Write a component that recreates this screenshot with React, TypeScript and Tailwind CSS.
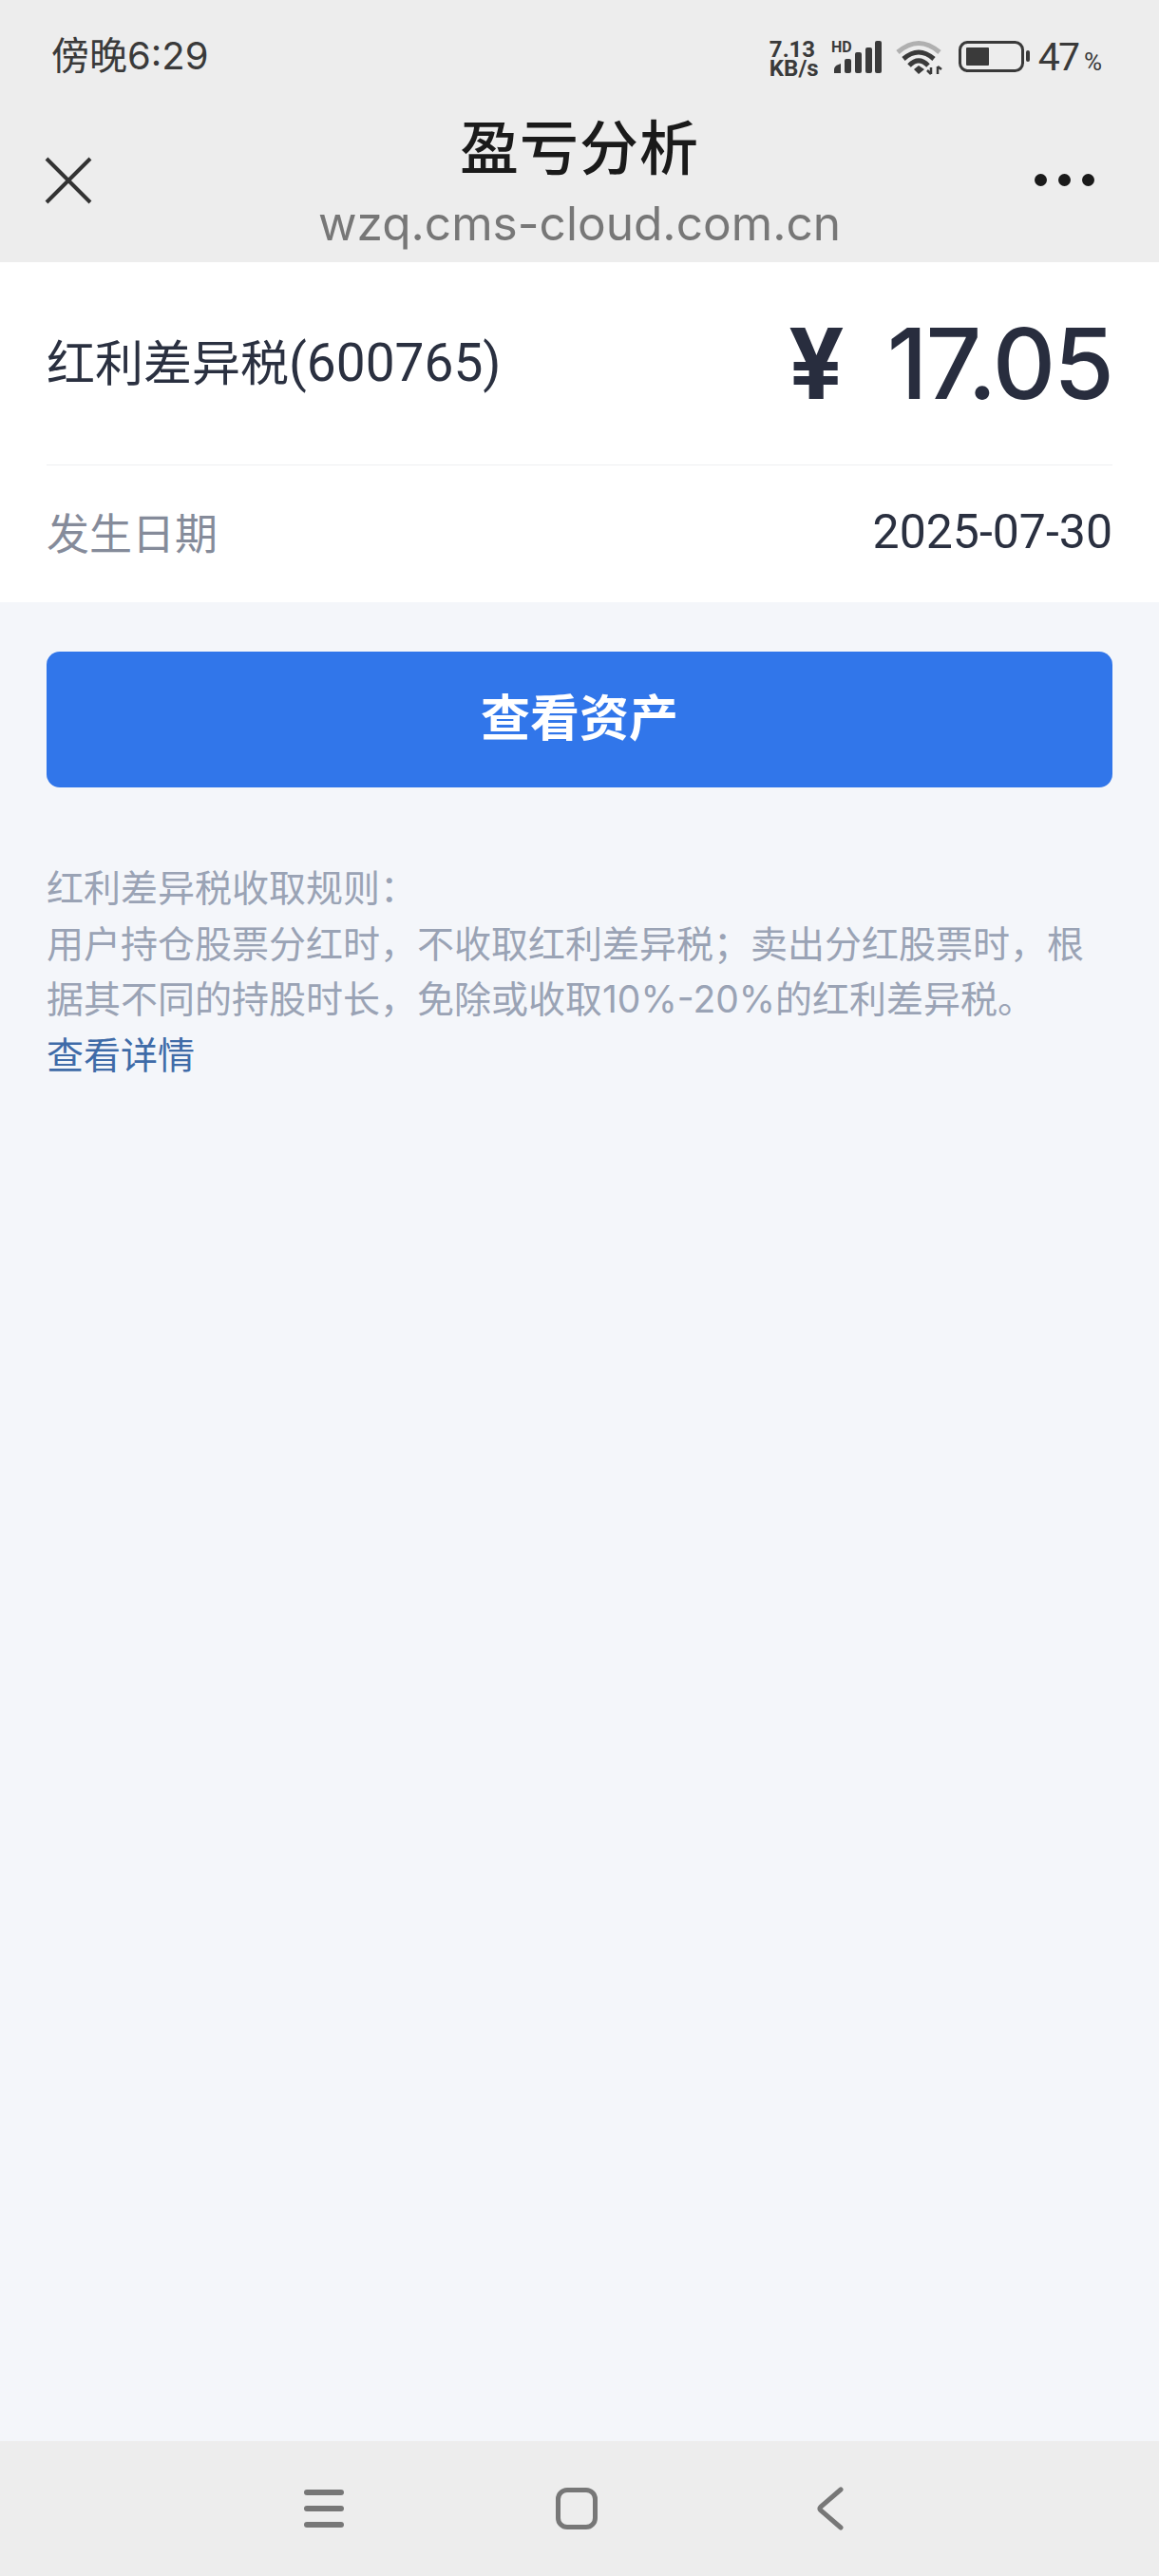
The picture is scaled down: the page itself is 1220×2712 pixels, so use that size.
const mixed = "font-['Inter','Noto_Sans_CJK_SC',sans-serif]";

function Signal() {
  return (
    <svg width="54" height="39" viewBox="0 -3 54 39" className="-mt-[3px] ml-[9px] block">
      <text x="0" y="13" fontSize="16" fontWeight="700" fill="#3a3a3a" fontFamily="Roboto, sans-serif">HD</text>
      <path d="M3 35 v-4 q0-4 7-6 v10 z" fill="#3a3a3a" />
      <rect x="14" y="20" width="7" height="15" rx="2" fill="#3a3a3a" />
      <rect x="25" y="13" width="7" height="22" rx="2" fill="#3a3a3a" />
      <rect x="36" y="8" width="7" height="27" rx="2" fill="#3a3a3a" />
      <rect x="46" y="1" width="7" height="34" rx="2" fill="#3a3a3a" />
    </svg>
  );
}

function Wifi() {
  return (
    <svg width="50" height="38" viewBox="0 0 50 38" className="ml-[14px] block">
      <path d="M2 13 Q24 -6 46 13" fill="none" stroke="#b0b0b0" strokeWidth="5" />
      <path d="M8 20 Q24 6 40 20" fill="none" stroke="#3a3a3a" strokeWidth="5" />
      <path d="M14 27 Q24 17 34 27" fill="none" stroke="#3a3a3a" strokeWidth="5" />
      <path d="M19 31 L24 27 L30 31 L24 36 Z" fill="#3a3a3a" />
      <path d="M37 36 V29 M33 32 L37 36 M44 36 V28 M44 28 L48 31" fill="none" stroke="#3a3a3a" strokeWidth="2.500" />
    </svg>
  );
}

function Battery() {
  return (
    <svg width="76" height="36" viewBox="0 0 76 36" className="ml-[16px] block">
      <rect x="1.500" y="2.500" width="66" height="30" rx="8" fill="none" stroke="#3a3a3a" strokeWidth="3" />
      <rect x="8" y="8" width="24" height="19" rx="1" fill="#3a3a3a" />
      <rect x="71" y="11" width="4" height="12" rx="2" fill="#3a3a3a" />
    </svg>
  );
}

function Status() {
  return (
    <div className="flex h-[88px] items-start justify-between pt-[35px] pl-[54px] pr-[60px]">
      <span className={`${mixed} text-[40px] leading-[48px] text-[#3a3a3a]`}>傍晚6:29</span>
      <div className="flex items-start pt-[7px]">
        <div className="w-[56px] font-['Roboto',sans-serif] text-[24px] font-bold leading-[20px] text-[#3a3a3a]">7.13 KB/s</div>
        <Signal />
        <Wifi />
        <Battery />
        <span className="ml-[8px] font-['Roboto',sans-serif] text-[41px] leading-[36px] tracking-[-2px] text-[#3a3a3a]">47<span className="ml-[6px] text-[26px] tracking-normal">%</span></span>
      </div>
    </div>
  );
}

function Nav() {
  return (
    <div className="relative flex h-[188px] items-start justify-center">
      <div className="flex flex-col items-center">
        <div className="mt-[28px] font-['Noto_Sans_CJK_SC',sans-serif] text-[62px] font-medium leading-[72px] tracking-[1px] text-[#1a1a1a]">盈亏分析</div>
        <div className={`${mixed} mt-[17px] text-[49.600px] leading-[60px] text-[#777777]`}>wzq.cms-cloud.com.cn</div>
      </div>
      <svg width="50" height="50" viewBox="0 0 50 50" className="absolute left-[47px] top-[77px]">
        <path d="M2 2 L48 48 M48 2 L2 48" stroke="#333333" strokeWidth="4" fill="none" />
      </svg>
      <div className="absolute right-[68px] top-[95px] flex gap-[12px]">
        <span className="h-[13px] w-[13px] rounded-full bg-[#1a1a1a]" />
        <span className="h-[13px] w-[13px] rounded-full bg-[#1a1a1a]" />
        <span className="h-[13px] w-[13px] rounded-full bg-[#1a1a1a]" />
      </div>
    </div>
  );
}

function BottomBar() {
  return (
    <div className="flex h-[142px] items-center bg-[#ededed] pl-[320px]">
      <div className="flex w-[42px] flex-col gap-[11px]">
        <span className="h-[6px] rounded-full bg-[#777777]" />
        <span className="h-[6px] rounded-full bg-[#777777]" />
        <span className="h-[6px] rounded-full bg-[#777777]" />
      </div>
      <div className="ml-[223px] h-[44px] w-[44px] rounded-[12px] border-[5px] border-[#777777]" />
      <svg width="28" height="46" viewBox="0 0 28 46" className="ml-[231px] block">
        <path d="M25 3 L4 21 Q2 23 4 25 L25 43" stroke="#777777" strokeWidth="5" strokeLinecap="round" fill="none" />
      </svg>
    </div>
  );
}

export default function App() {
  return (
    <div className={`flex h-[2712px] w-[1220px] flex-col overflow-hidden bg-[#f4f6fa] ${mixed}`}>
      <header className="bg-[#ededed]">
        <Status />
        <Nav />
      </header>

      <section className="h-[358px] bg-white px-[49px]">
        <div className="flex h-[214px] items-start justify-between border-b border-[#eeeff2]">
          <span className="mt-[76px] font-['Roboto','Noto_Sans_CJK_SC',sans-serif] text-[51px] leading-[60px] text-[#2a3040]">
            红利差异税<span className="text-[55px]">(600765)</span>
          </span>
          <span className="mt-[47px] flex items-center text-[103px] font-medium leading-[120px] tracking-[-2px] text-[#282d3e]">
            <span className="mr-[47px] font-bold">¥</span>17.05
          </span>
        </div>
        <div className="flex items-center justify-between pt-[42px]">
          <span className="font-['Noto_Sans_CJK_SC',sans-serif] text-[45px] leading-[56px] text-[#858b9a]">发生日期</span>
          <span className="font-['Roboto',sans-serif] text-[50px] leading-[56px] text-[#2a3040]">2025-07-30</span>
        </div>
      </section>

      <main className="flex-1 px-[49px] pt-[52px]">
        <button className="flex h-[143px] w-full items-center justify-center rounded-[14px] bg-[#3176ea] pb-[2px] text-[52px] font-bold text-white">
          查看资产
        </button>
        <div className="mt-[77px] text-[39px] leading-[58.500px] text-[#9aa3b5]">
          <p>红利差异税收取规则：</p>
          <p>用户持仓股票分红时，不收取红利差异税；卖出分红股票时，根据其不同的持股时长，免除或收取10%-20%的红利差异税。</p>
          <p className="text-[#3f6ba8]">查看详情</p>
        </div>
      </main>

      <BottomBar />
    </div>
  );
}
